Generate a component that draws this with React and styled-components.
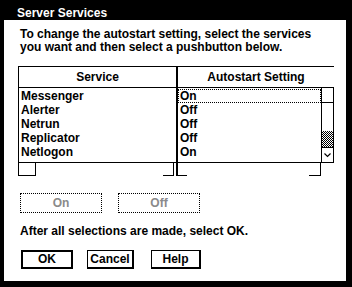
import React from "react";
import styled, { createGlobalStyle } from "styled-components";

const GlobalStyle = createGlobalStyle`
  html, body {
    margin: 0;
    padding: 0;
    background: #000;
  }
  * {
    box-sizing: border-box;
  }
`;

const Window = styled.div`
  width: 352px;
  height: 287px;
  background: #000;
  padding: 0 6px 6px 4px;
  display: flex;
  flex-direction: column;
  font-family: "Liberation Sans", Arial, sans-serif;
  font-weight: bold;
  font-size: 12px;
  color: #000;
`;

const TitleBar = styled.div`
  height: 20px;
  padding: 7px 0 0 13px;
  line-height: 13px;
  color: #fff;
`;

const Body = styled.div`
  flex: 1;
  background: #fff;
  padding: 8px 0 0 14px;
  display: flex;
  flex-direction: column;
`;

const Intro = styled.div`
  padding-left: 2px;
  line-height: 13px;
  white-space: nowrap;
`;

const Table = styled.div`
  display: flex;
  margin-top: 12px;
`;

const Column = styled.div`
  width: ${(p) => p.$width}px;
  display: flex;
  flex-direction: column;
  border-left: ${(p) => (p.$edge ? "1px solid #000" : "none")};
`;

const Divider = styled.div`
  width: 2px;
  background: #000;
`;

const HeaderCell = styled.div`
  height: 22px;
  border-top: 1px solid #000;
  border-bottom: 1px solid #000;
  line-height: 20px;
  text-align: center;
  white-space: nowrap;
`;

const ListBody = styled.div`
  display: flex;
  height: 75px;
`;

const List = styled.div`
  flex: 1;
  height: 75px;
  border-bottom: 1px solid #000;
  padding-top: 1px;
`;

const Row = styled.div`
  height: 14px;
  line-height: 14px;
  padding-left: ${(p) => p.$indent}px;
  white-space: nowrap;
  outline: ${(p) => (p.$focus ? "1px dotted #000" : "none")};
  outline-offset: -1px;
`;

const VScroll = styled.div`
  width: 13px;
  height: 75px;
  border: 1px solid #000;
  border-top: none;
  display: flex;
  flex-direction: column;
`;

const ScrollButton = styled.div`
  height: 15px;
  ${(p) => (p.$down ? "border-top: 1px solid #000;" : "border-bottom: 1px solid #000;")}
  display: flex;
  align-items: center;
  justify-content: center;
`;

const Track = styled.div`
  flex: 1;
`;

const Thumb = styled.div`
  height: 16px;
  background: repeating-conic-gradient(#000 0 25%, #fff 0 50%) 0 0 / 2px 2px;
`;

const HScroll = styled.div`
  height: 13px;
  display: flex;
  justify-content: space-between;
  padding-right: ${(p) => p.$inset}px;
`;

const Stub = styled.div`
  width: ${(p) => p.$w}px;
  border-bottom: 1px solid #000;
  border-right: ${(p) => (p.$right ? "1px solid #000" : "none")};
`;

const ToggleRow = styled.div`
  display: flex;
  gap: 16px;
  margin: 17px 0 0 2px;
`;

const DisabledButton = styled.div`
  width: 82px;
  height: 20px;
  border: 1px dotted #000;
  color: #8a8a8a;
  line-height: 18px;
  text-align: center;
`;

const Note = styled.div`
  margin-top: 11px;
  padding-left: 2px;
  line-height: 14px;
`;

const ButtonRow = styled.div`
  display: flex;
  margin: 12px 0 0 3px;
`;

const PushButton = styled.div`
  width: ${(p) => p.$w}px;
  height: 19px;
  margin-left: ${(p) => p.$gap}px;
  border-style: solid;
  border-color: #000;
  border-width: ${(p) => (p.$default ? "2px" : "1px 2px 2px 1px")};
  line-height: ${(p) => (p.$default ? 15 : 16)}px;
  text-align: center;
`;

const services = [
  ["Messenger", "On"],
  ["Alerter", "Off"],
  ["Netrun", "Off"],
  ["Replicator", "Off"],
  ["Netlogon", "On"],
];

const Chevron = () => (
  <svg width="7" height="5" viewBox="0 0 7 5">
    <path d="M0.5 0.5 L3.5 3.5 L6.5 0.5" fill="none" stroke="#000" strokeWidth="1.2" />
  </svg>
);

export default function App() {
  return (
    <>
      <GlobalStyle />
      <Window>
        <TitleBar>Server Services</TitleBar>
        <Body>
          <Intro>
            To change the autostart setting, select the services
            <br />
            you want and then select a pushbutton below.
          </Intro>
          <Table>
            <Column $width={158} $edge>
              <HeaderCell>Service</HeaderCell>
              <List>
                {services.map(([name]) => (
                  <Row key={name} $indent={2}>
                    {name}
                  </Row>
                ))}
              </List>
              <HScroll $inset={2}>
                <Stub $w={17} $right />
                <Stub $w={11} $right />
              </HScroll>
            </Column>
            <Divider />
            <Column $width={156}>
              <HeaderCell>Autostart Setting</HeaderCell>
              <ListBody>
                <List>
                  {services.map(([name, value], i) => (
                    <Row key={name} $indent={2} $focus={i === 0}>
                      {value}
                    </Row>
                  ))}
                </List>
                <VScroll>
                  <ScrollButton />
                  <Track />
                  <Thumb />
                  <ScrollButton $down>
                    <Chevron />
                  </ScrollButton>
                </VScroll>
              </ListBody>
              <HScroll $inset={13}>
                <Stub $w={9} />
                <Stub $w={12} $right />
              </HScroll>
            </Column>
          </Table>
          <ToggleRow>
            <DisabledButton>On</DisabledButton>
            <DisabledButton>Off</DisabledButton>
          </ToggleRow>
          <Note>After all selections are made, select OK.</Note>
          <ButtonRow>
            <PushButton $w={52} $gap={0} $default>
              OK
            </PushButton>
            <PushButton $w={47} $gap={14}>
              Cancel
            </PushButton>
            <PushButton $w={50} $gap={17}>
              Help
            </PushButton>
          </ButtonRow>
        </Body>
      </Window>
    </>
  );
}
